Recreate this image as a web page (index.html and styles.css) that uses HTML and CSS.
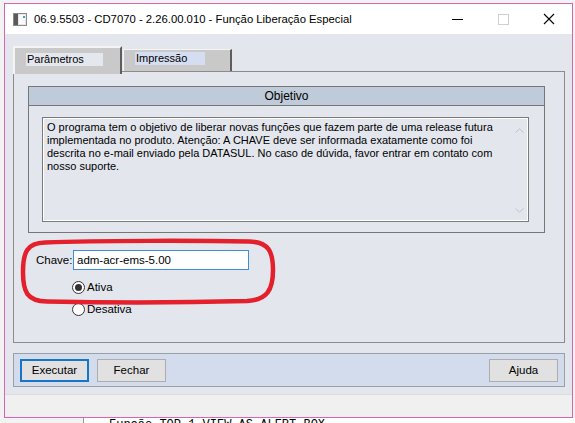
FILE: index.html
```html
<!DOCTYPE html>
<html>
<head>
	<title>Função Liberação Especial</title>
	<link rel="stylesheet" href="styles.css">
</head>
<body>
	<!-- Dialog window -->
	<div class="window">
		<div class="titlebar">
			<svg class="app-icon" width="14" height="13" viewBox="0 0 14 13">
				<rect x="0.5" y="0.5" width="13" height="12" fill="#e6e6e6" stroke="#8a8a8a"/>
				<rect x="1" y="1" width="4" height="11" fill="#5a5a5a"/>
				<rect x="6" y="2" width="6" height="9" fill="#fbfbfb"/>
				<rect x="10" y="3" width="2" height="2" fill="#3aa6b9"/>
			</svg>
			<span class="title">06.9.5503 - CD7070 - 2.26.00.010 - Função Liberação Especial</span>
			<div class="controls">
				<svg width="12" height="12" viewBox="0 0 12 12"><line x1="1" y1="6.5" x2="12" y2="6.5" stroke="#000"/></svg>
				<svg width="12" height="12" viewBox="0 0 12 12"><rect x="1.5" y="1.5" width="10" height="10" fill="none" stroke="#cfcfcf"/></svg>
				<svg width="12" height="12" viewBox="0 0 12 12"><path d="M1 1 L11 11 M11 1 L1 11" stroke="#000" stroke-width="1.1"/></svg>
			</div>
		</div>

		<div class="client">
			<!-- Tabs -->
			<div class="tabs">
				<div class="tab active"><span class="tab-label">Parâmetros</span></div>
				<div class="tab"><span class="tab-label">Impressão</span></div>
			</div>

			<div class="panel">
				<div class="group">
					<div class="group-title">Objetivo</div>
					<div class="group-body">
						<div class="memo">
							<div class="memo-text">
								O programa tem o objetivo de liberar novas funções que fazem parte de uma release futura<br>
								implementada no produto. Atenção: A CHAVE deve ser informada exatamente como foi<br>
								descrita no e-mail enviado pela DATASUL. No caso de dúvida, favor entrar em contato com<br>
								nosso suporte.
							</div>
							<div class="memo-scroll">
								<svg width="9" height="5" viewBox="0 0 9 5"><path d="M0.5 4.5 L4.5 0.8 L8.5 4.5" fill="none" stroke="#c4c4c4"/></svg>
								<svg width="9" height="5" viewBox="0 0 9 5"><path d="M0.5 0.5 L4.5 4.2 L8.5 0.5" fill="none" stroke="#c4c4c4"/></svg>
							</div>
						</div>
					</div>
				</div>

				<div class="key-row">
					<label class="key-label">Chave:</label>
					<div class="key-input">adm-acr-ems-5.00</div>
				</div>

				<div class="radios">
					<div class="radio checked"><span class="dot"></span>Ativa</div>
					<div class="radio"><span class="dot"></span>Desativa</div>
				</div>
			</div>

			<!-- Action buttons -->
			<div class="button-bar">
				<button class="btn default">Executar</button>
				<button class="btn">Fechar</button>
				<button class="btn help">Ajuda</button>
			</div>

			<div class="status"></div>
		</div>
	</div>

	<div class="behind"><span>Função TOP-1 VIEW-AS ALERT-BOX</span></div>

	<!-- Red highlight drawn over the key field -->
	<svg class="annotation" width="258" height="68" viewBox="0 0 258 68">
		<path d="M26 4.5 C80 2.5 180 2.5 230 3.5 C250 4 254 14 254 32 C254 52 248 62 228 63 C170 64.5 80 64.5 28 63.5 C8 63 4 54 4 34 C4 14 8 5 26 4.5 Z" fill="none" stroke="#e3202b" stroke-width="4.5"/>
	</svg>
</body>
</html>
```

FILE: styles.css
```css
body {
	margin: 0;
	background: #f3f3f3;
	font-family: "Liberation Sans", Arial, sans-serif;
	font-size: 11px;
	color: #000;
	position: relative;
	height: 423px;
	overflow: hidden;
}

.window {
	margin: 3px 0 0 4px;
	width: 567px;
	height: 413px;
	border: 1px solid #d864b4;
	display: flex;
	flex-direction: column;
	background: #e3e6ed;
}

/* Title bar */
.titlebar {
	height: 30px;
	flex: none;
	background: #fff;
	display: flex;
	align-items: center;
}

.app-icon {
	margin-left: 8px;
	margin-top: 1px;
}

.title {
	margin-left: 7px;
	font-size: 11.3px;
	color: #000;
	white-space: nowrap;
}

.controls {
	margin-left: auto;
	display: flex;
	gap: 34px;
	margin-right: 17px;
}

/* Client area */
.client {
	flex: 1;
	display: flex;
	flex-direction: column;
	padding: 12px 7px 0 8px;
}

.tabs {
	display: flex;
	align-items: flex-end;
	height: 25px;
	position: relative;
	z-index: 1;
}

.tab {
	width: 106px;
	height: 19px;
	background: #c9c9c9;
	border-top: 1px solid #f4f4f4;
	border-left: 1px solid #f4f4f4;
	border-right: 2px solid #5e5e5e;
	display: flex;
	align-items: flex-start;
	padding-top: 2px;
	box-sizing: content-box;
}

.tab .tab-label {
	margin-left: 11px;
	padding: 0 1px;
	width: 68px;
	height: 13px;
	line-height: 13px;
	background: #d5ddf0;
}

.tab.active {
	height: 21px;
	margin-bottom: -3px;
	padding-top: 5px;
	border-top: 2px solid #f4f4f4;
	border-left: 2px solid #f4f4f4;
	width: 105px;
	margin-right: 1px;
}

.tab.active .tab-label {
	width: 75px;
	background: #e4e7ee;
}

.panel {
	height: 256px;
	border: 1px solid #8b8b8b;
	padding: 14px 19px 0 14px;
}

.group {
	border: 1px solid #767676;
}

.group-title {
	height: 18px;
	line-height: 18px;
	background: #bfcbd9;
	border-bottom: 1px solid #767676;
	text-align: center;
	font-size: 12px;
}

.group-body {
	padding: 11px 15px 10px 13px;
}

.memo {
	height: 103px;
	border: 1px solid #7b7b7b;
	box-shadow: inset 1px 1px 0 #fff, inset -1px -1px 0 #fff;
	display: flex;
	justify-content: space-between;
}

.memo-text {
	padding: 3px 0 0 4px;
	line-height: 13px;
	white-space: nowrap;
}

.memo-scroll {
	width: 18px;
	display: flex;
	flex-direction: column;
	align-items: center;
	justify-content: space-between;
	padding: 10px 0 8px;
}

.key-row {
	margin-top: 17px;
	display: flex;
	align-items: center;
	padding-left: 8px;
}

.key-label {
	width: 37px;
	font-size: 11.5px;
}

.key-input {
	width: 171px;
	height: 18px;
	line-height: 18px;
	padding-left: 3px;
	background: #fff;
	border: 1px solid #3d8ed6;
	font-size: 11.5px;
}

.radios {
	padding-left: 44px;
	margin-top: 10px;
	display: flex;
	flex-direction: column;
	gap: 8px;
}

.radio {
	display: flex;
	align-items: center;
	height: 14px;
	font-size: 11.5px;
}

.radio .dot {
	width: 11px;
	height: 11px;
	border: 1px solid #333;
	border-radius: 50%;
	background: #fff;
	margin-right: 2px;
	display: flex;
	align-items: center;
	justify-content: center;
}

.radio.checked .dot::after {
	content: "";
	width: 7px;
	height: 7px;
	border-radius: 50%;
	background: #333;
}

/* Button bar */
.button-bar {
	margin-top: 10px;
	height: 32px;
	border: 1px solid #9aa0a8;
	background: #d3dcec;
	display: flex;
	align-items: center;
	gap: 8px;
	padding: 0 6px;
}

.btn {
	width: 69px;
	height: 23px;
	background: #e1e1e1;
	border: 1px solid #adadad;
	font-family: "Liberation Sans", Arial, sans-serif;
	font-size: 11.5px;
	color: #000;
	padding: 0;
}

.btn.default {
	border: 2px solid #1874c8;
}

.btn.help {
	margin-left: auto;
}

.status {
	margin: auto -7px 0 -8px;
	height: 22px;
	background: #f0f0f0;
	border-top: 1px solid #dcdcdc;
}

/* Text of the window behind */
.behind {
	margin-left: 83px;
	border-left: 1px solid #9a9a9a;
	height: 10px;
	padding-left: 25px;
	font-family: "Liberation Mono", monospace;
	font-size: 12px;
	line-height: 14px;
	background: #fff;
}

.annotation {
	position: absolute;
	left: 19px;
	top: 238px;
}
```
